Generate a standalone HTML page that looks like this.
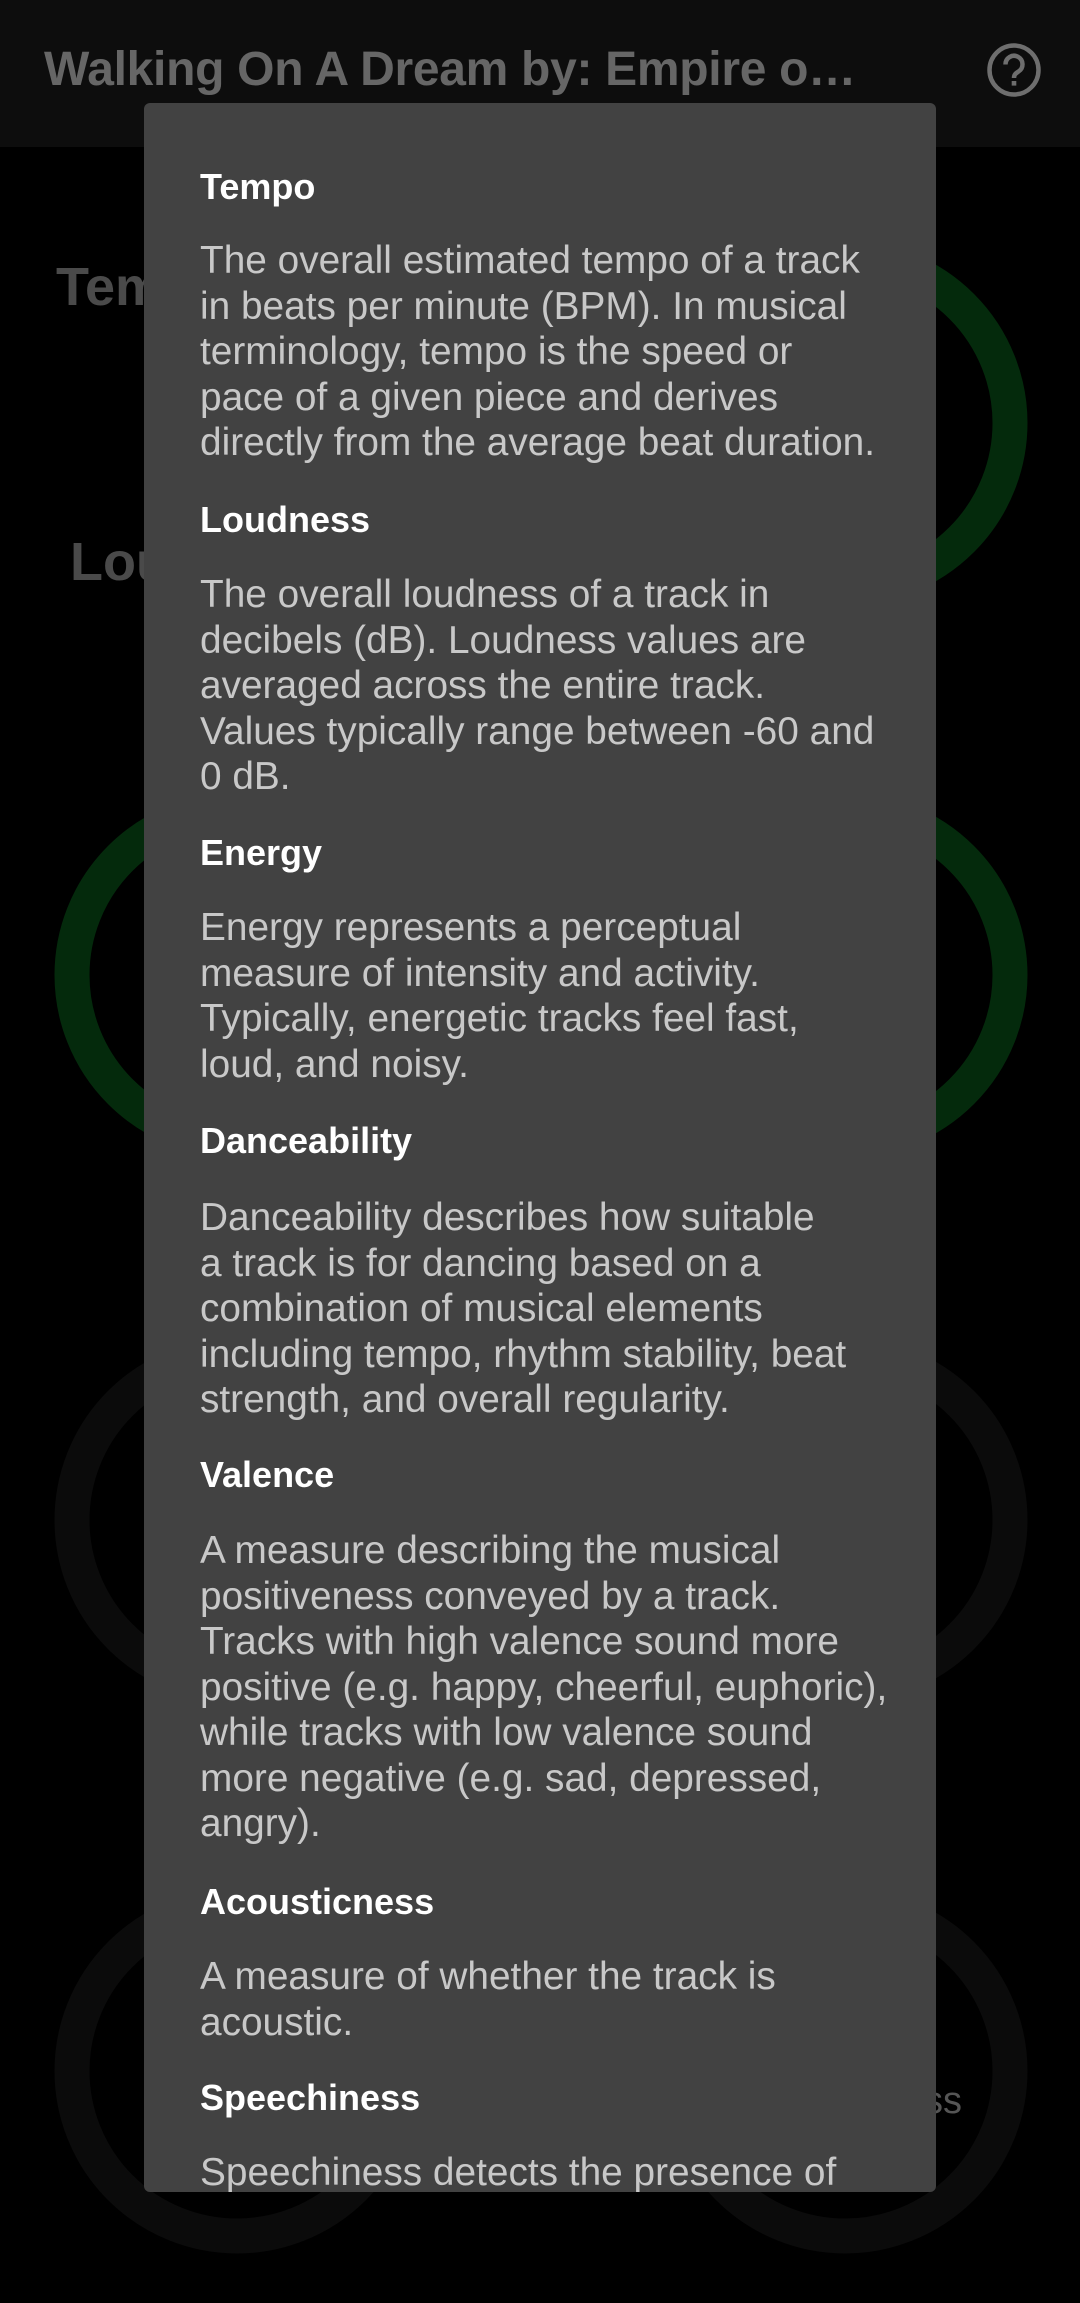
<!DOCTYPE html>
<html><head><meta charset="utf-8">
<style>
html,body{margin:0;padding:0;}
body{width:1080px;height:2303px;background:#000;position:relative;overflow:hidden;font-family:"Liberation Sans",sans-serif;}
.bar{position:absolute;left:0;top:0;width:1080px;height:147px;background:#0d0d0d;}
.title{position:absolute;left:44px;top:42px;font-size:48px;font-weight:bold;color:#666;white-space:nowrap;letter-spacing:-0.3px;}
.bg{position:absolute;font-weight:bold;color:#4a4a4a;font-size:54px;}
.dlg{position:absolute;left:144px;top:103px;width:792px;height:2089px;background:#424242;border-radius:6px;overflow:hidden;}
.h{position:absolute;left:56px;font-weight:bold;color:#fff;font-size:36px;line-height:46px;white-space:nowrap;}
.b{position:absolute;left:56px;color:#c8c8c8;font-size:38.8px;line-height:45.5px;white-space:nowrap;}
</style></head><body>
<svg width="1080" height="2303" style="position:absolute;left:0;top:0">
<g fill="none" stroke-width="35">
<circle cx="845" cy="423" r="165" stroke="#042a0c"/>
<circle cx="237" cy="975" r="165" stroke="#042a0c"/>
<circle cx="845" cy="975" r="165" stroke="#042a0c"/>
<circle cx="237" cy="1520" r="165" stroke="#0b0b0b"/>
<circle cx="845" cy="1520" r="165" stroke="#0b0b0b"/>
<circle cx="237" cy="2071" r="165" stroke="#0b0b0b"/>
<circle cx="845" cy="2071" r="165" stroke="#0b0b0b"/>
</g>
</svg>
<div class="bar"></div>
<div class="title">Walking On A Dream by: Empire o…</div>
<svg width="60" height="60" style="position:absolute;left:984px;top:40px" viewBox="0 0 60 60">
<circle cx="30" cy="30" r="24.5" fill="none" stroke="#6e6e6e" stroke-width="4.5"/>
<path d="M21.5 24.5a8.5 8.5 0 1 1 13 7c-3 2-4.5 3.2-4.5 6.5" fill="none" stroke="#6e6e6e" stroke-width="4.5"/>
<rect x="27.7" y="41" width="4.6" height="4.6" fill="#6e6e6e"/>
</svg>
<div class="bg" style="left:56px;top:256px">Tempo</div>
<div class="bg" style="left:70px;top:531px">Loudness</div>
<div style="position:absolute;left:924px;top:2080px;font-size:38px;color:#555">ss</div>
<div class="dlg">
<div class="h" style="top:61px">Tempo</div>
<div class="b" style="top:135px">The overall estimated tempo of a track<br>in beats per minute (BPM). In musical<br>terminology, tempo is the speed or<br>pace of a given piece and derives<br>directly from the average beat duration.</div>
<div class="h" style="top:394px">Loudness</div>
<div class="b" style="top:469px">The overall loudness of a track in<br>decibels (dB). Loudness values are<br>averaged across the entire track.<br>Values typically range between -60 and<br>0 dB.</div>
<div class="h" style="top:727px">Energy</div>
<div class="b" style="top:802px">Energy represents a perceptual<br>measure of intensity and activity.<br>Typically, energetic tracks feel fast,<br>loud, and noisy.</div>
<div class="h" style="top:1015px">Danceability</div>
<div class="b" style="top:1092px">Danceability describes how suitable<br>a track is for dancing based on a<br>combination of musical elements<br>including tempo, rhythm stability, beat<br>strength, and overall regularity.</div>
<div class="h" style="top:1349px">Valence</div>
<div class="b" style="top:1425px">A measure describing the musical<br>positiveness conveyed by a track.<br>Tracks with high valence sound more<br>positive (e.g. happy, cheerful, euphoric),<br>while tracks with low valence sound<br>more negative (e.g. sad, depressed,<br>angry).</div>
<div class="h" style="top:1776px">Acousticness</div>
<div class="b" style="top:1851px">A measure of whether the track is<br>acoustic.</div>
<div class="h" style="top:1972px">Speechiness</div>
<div class="b" style="top:2047px">Speechiness detects the presence of</div>
</div>
</body></html>
